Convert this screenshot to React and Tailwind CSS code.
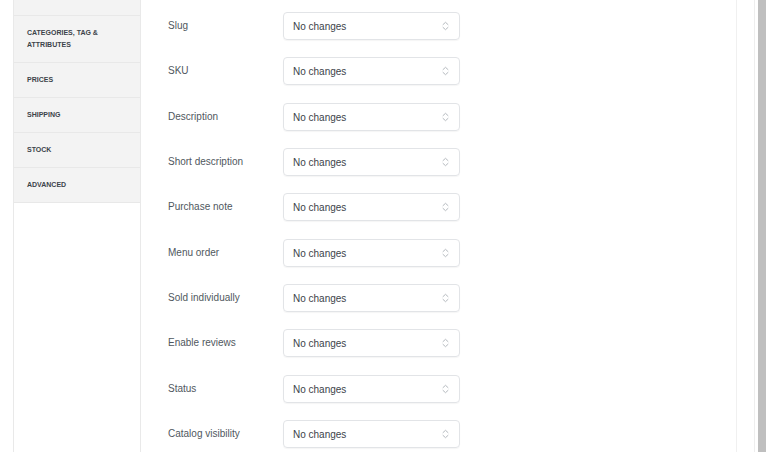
import React from "react";

const navItems = [
  { label: "IMAGES", h: "h-[35px]" },
  { label: "CATEGORIES, TAG & ATTRIBUTES", h: "h-[47px]" },
  { label: "PRICES", h: "h-[35px]" },
  { label: "SHIPPING", h: "h-[35px]" },
  { label: "STOCK", h: "h-[35px]" },
  { label: "ADVANCED", h: "h-[35px]" },
];

const fields = [
  "Slug",
  "SKU",
  "Description",
  "Short description",
  "Purchase note",
  "Menu order",
  "Sold individually",
  "Enable reviews",
  "Status",
  "Catalog visibility",
];

function UpDown() {
  return (
    <svg width="7" height="10" viewBox="0 0 7 10" fill="none" className="text-[#b4b9be]">
      <path d="M1 3.6 L3.5 1.3 L6 3.6" stroke="currentColor" strokeWidth="1" strokeLinecap="round" strokeLinejoin="round" />
      <path d="M1 6.4 L3.5 8.7 L6 6.4" stroke="currentColor" strokeWidth="1" strokeLinecap="round" strokeLinejoin="round" />
    </svg>
  );
}

export default function App() {
  return (
    <div
      className="flex w-full h-[452px] overflow-hidden bg-white"
      style={{ fontFamily: '"Liberation Sans", Arial, sans-serif' }}
    >
      <div className="w-[13px] shrink-0" />
      <aside className="w-[128px] shrink-0 border-l border-r border-[#e9e9e9] flex flex-col overflow-hidden">
        <div className="-mt-[19px] flex flex-col bg-[#f3f3f3]">
          {navItems.map((it) => (
            <div
              key={it.label}
              className={`${it.h} flex items-center pl-[13px] pr-[30px] border-b border-[#e8e8e8] text-[7px] leading-[12px] font-bold text-[#3c434a]`}
            >
              {it.label}
            </div>
          ))}
        </div>
      </aside>
      <main className="w-[596px] shrink-0 border-r border-[#f0f0f0] pl-[27px] pt-[12px] flex flex-col gap-[17.35px]">
        {fields.map((f) => (
          <div key={f} className="flex items-center h-[28px] shrink-0">
            <div className="w-[115px] shrink-0 text-[10px] text-[#50575e] -mt-[1px]">{f}</div>
            <div className="w-[177px] h-[28px] rounded-[4px] border border-[#e2e4e7] shadow-[0_1px_1px_rgba(0,0,0,0.04)] flex items-center justify-between pl-[9px] pr-[10px]">
              <span className="text-[10px] text-[#3c434a] mt-[1px]">No changes</span>
              <UpDown />
            </div>
          </div>
        ))}
      </main>
      <div className="w-[18px] shrink-0 border-r border-[#eeeeee]" />
      <div className="w-[11px] shrink-0 border-r-[8px] border-[#bfbfbf]" />
      <div className="flex-1 bg-white" />
    </div>
  );
}
